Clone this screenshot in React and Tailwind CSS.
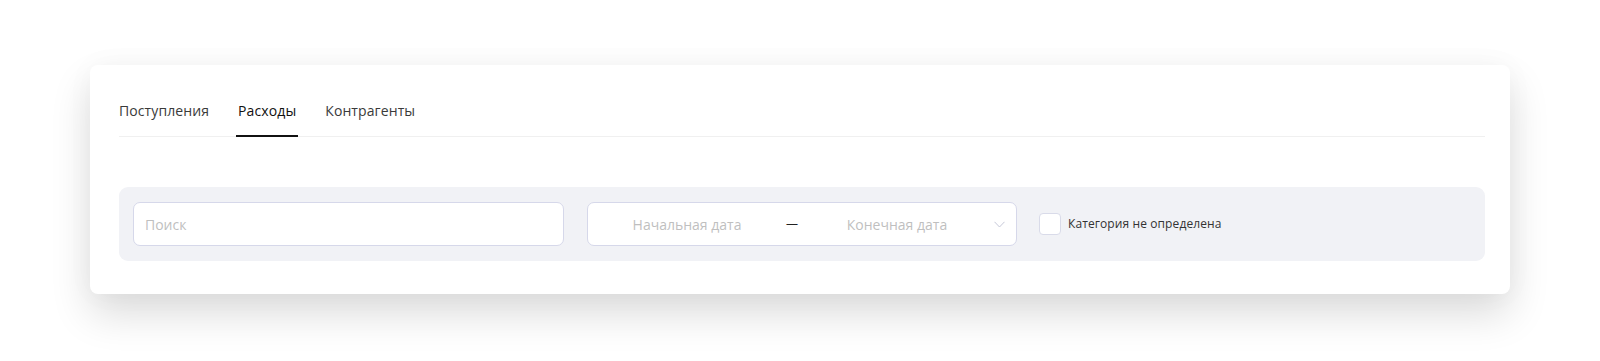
import React, { useState } from 'react';

const tabs = ['Поступления', 'Расходы', 'Контрагенты'];

export default function App() {
  const [active, setActive] = useState(1);
  const [unknownCat, setUnknownCat] = useState(false);

  return (
    <div className="min-h-[361px] bg-white pt-[65px] px-[90px] font-['Open_Sans',sans-serif]">
      <div className="bg-white rounded-[8px] shadow-[0_20px_40px_rgba(0,0,0,0.14),0_0_30px_rgba(0,0,0,0.03)] pt-[25px] pb-[33px] pl-[29px] pr-[25px]">
        {/* вкладки */}
        <div className="flex gap-[29px] border-b border-[#f0f0f0]">
          {tabs.map((t, i) => (
            <button
              key={t}
              onClick={() => setActive(i)}
              className={
                'relative pt-[10px] pb-[14px] text-[14px] leading-[22px] tracking-[0.1px] ' +
                (i === active ? 'text-[#111]' : 'text-[#3a3a3a]')
              }
            >
              {t}
              {i === active && (
                <span className="absolute left-[-2px] right-[-2px] bottom-[-1px] h-[2px] bg-[#111]" />
              )}
            </button>
          ))}
        </div>

        {/* фильтры */}
        <div className="mt-[50px] bg-[#f1f2f6] rounded-[9px] px-[14px] py-[15px] flex items-center">
          <input
            type="text"
            placeholder="Поиск"
            className="w-[431px] h-[44px] bg-white border border-[#d6d8ea] rounded-[7px] px-[11px] text-[14px] text-[#333] placeholder:text-[#bfbfbf] outline-none"
          />
          <div className="ml-[23px] w-[430px] h-[44px] bg-white border border-[#d6d8ea] rounded-[7px] px-[11px] flex items-center text-[14px]">
            <input
              type="text"
              placeholder="Начальная дата"
              className="flex-1 min-w-0 text-center bg-transparent placeholder:text-[#bfbfbf] outline-none"
            />
            <span className="w-[34px] text-center text-[12px] text-[#222]">—</span>
            <input
              type="text"
              placeholder="Конечная дата"
              className="flex-1 min-w-0 text-center bg-transparent placeholder:text-[#bfbfbf] outline-none"
            />
            <span className="w-[20px] flex justify-end">
              <svg width="11" height="7" viewBox="0 0 11 7" fill="none">
                <polyline points="0.5,0.8 5.5,6 10.5,0.8" stroke="#c6c8d8" strokeWidth="1" />
              </svg>
            </span>
          </div>
          <label className="ml-[22px] flex items-center gap-[7px] cursor-pointer">
            <span
              onClick={() => setUnknownCat(!unknownCat)}
              className={
                'w-[22px] h-[22px] rounded-[4px] border border-[#d9dbe9] ' +
                (unknownCat ? 'bg-[#1890ff]' : 'bg-white')
              }
            />
            <span className="text-[12px] text-[#333] tracking-[0.1px]">Категория не определена</span>
          </label>
        </div>
      </div>
    </div>
  );
}
